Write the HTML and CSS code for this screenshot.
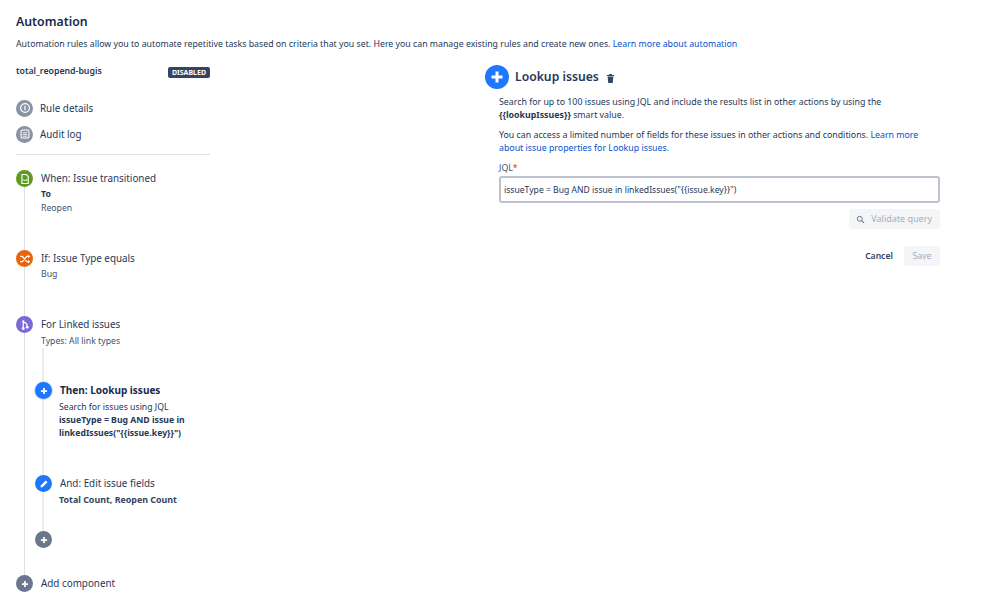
FILE: index.html
```html
<!DOCTYPE html>
<html lang="en">
<head>
<meta charset="utf-8">
<title>Automation</title>
<link rel="stylesheet" href="styles.css">
</head>
<body>
<div class="page">
  <h1 class="title">Automation</h1>
  <p class="intro">Automation rules allow you to automate repetitive tasks based on criteria that you set. Here you can manage existing rules and create new ones. <a href="#">Learn more about automation</a></p>
  <div class="columns">
    <aside class="sidebar">
      <div class="rule-head"><span class="rule-name">total_reopend-bugis</span><span class="badge">DISABLED</span></div>
      <div class="nav">
        <div class="nav-row"><span class="dot grey"><svg viewBox="0 0 16 16"><circle cx="8" cy="8" r="5" fill="none" stroke="#fff" stroke-width="1.4"/><path d="M8 5.5v5" stroke="#fff" stroke-width="1.4"/></svg></span><span class="nav-label">Rule details</span></div>
        <div class="nav-row"><span class="dot grey"><svg viewBox="0 0 16 16"><rect x="3.5" y="3.5" width="9" height="9" rx="1.5" fill="none" stroke="#fff" stroke-width="1.2"/><path d="M5.5 6.5h5M5.5 8.5h5M5.5 10.500h5" stroke="#fff" stroke-width=".9"/></svg></span><span class="nav-label">Audit log</span></div>
      </div>
      <div class="timeline">
        <div class="step when">
          <span class="dot green"><svg viewBox="0 0 16 16"><path d="M4.500 2.800h4.800l2.400 2.400v8H4.500z" fill="none" stroke="#fff" stroke-width="1.300"/><path d="M6 8.500l1.200 1.500 1-1 1 1 1-2" fill="none" stroke="#fff" stroke-width="1.100"/></svg></span>
          <div class="step-body"><div class="step-title">When: Issue transitioned</div><div class="strong-sm">To</div><div class="sub">Reopen</div></div>
        </div>
        <div class="step cond">
          <span class="dot orange"><svg viewBox="0 0 16 16"><path d="M2.500 5h2.500l5 6h2M2.500 11h2.500l5-6h2" fill="none" stroke="#fff" stroke-width="1.400"/><path d="M11.500 3l2.500 2-2.500 2zM11.500 9l2.500 2-2.500 2z" fill="#fff"/></svg></span>
          <div class="step-body"><div class="step-title">If: Issue Type equals</div><div class="sub">Bug</div></div>
        </div>
        <div class="step branch">
          <span class="dot purple"><svg viewBox="0 0 16 16"><path d="M6 3.500v9M6 5c3 0 4.500 1.500 4.500 4.500" fill="none" stroke="#fff" stroke-width="1.400"/><circle cx="6" cy="12" r="1.600" fill="#fff"/><circle cx="10.500" cy="10.500" r="1.600" fill="#fff"/><circle cx="6" cy="3.800" r="1.300" fill="#fff"/></svg></span>
          <div class="step-body"><div class="step-title">For Linked issues</div><div class="sub">Types: All link types</div></div>
        </div>
        <div class="nested">
          <div class="step then">
            <span class="dot blue ring"><svg viewBox="0 0 16 16"><path d="M8 4.500v7M4.500 8h7" stroke="#fff" stroke-width="2"/></svg></span>
            <div class="step-body"><div class="step-title bold">Then: Lookup issues</div><div class="sub dark">Search for issues using JQL</div><div class="strong-sm wrap">issueType = Bug AND issue in linkedIssues("{{issue.key}}")</div></div>
          </div>
          <div class="step and">
            <span class="dot blue"><svg viewBox="0 0 16 16"><path d="M4 12l.600-2.600 5.400-5.400 2 2-5.400 5.400z" fill="#fff"/></svg></span>
            <div class="step-body"><div class="step-title">And: Edit issue fields</div><div class="strong-sm slate">Total Count, Reopen Count</div></div>
          </div>
          <div class="step add-inner">
            <span class="dot slate-bg"><svg viewBox="0 0 16 16"><path d="M8 4.500v7M4.500 8h7" stroke="#fff" stroke-width="2"/></svg></span>
          </div>
        </div>
        <div class="step add-outer">
          <span class="dot slate-bg"><svg viewBox="0 0 16 16"><path d="M8 4.500v7M4.500 8h7" stroke="#fff" stroke-width="2"/></svg></span>
          <div class="step-body"><div class="step-title">Add component</div></div>
        </div>
      </div>
    </aside>
    <main class="detail">
      <div class="detail-head">
        <span class="dot big blue"><svg viewBox="0 0 24 24"><path d="M12 6.500v11M6.500 12h11" stroke="#fff" stroke-width="3"/></svg></span>
        <h2 class="detail-title">Lookup issues</h2>
        <svg class="trash" viewBox="0 0 10 12"><path d="M1 2.200h8v1H1zM3.500 1h3v1h-3zM1.800 3.800h6.400l-.7 7.200h-5z" fill="#344563"/></svg>
      </div>
      <div class="detail-body">
        <p class="para">Search for up to 100 issues using JQL and include the results list in other actions by using the <b>{{lookupIssues}}</b> smart value.</p>
        <p class="para">You can access a limited number of fields for these issues in other actions and conditions. <a href="#">Learn more about issue properties for Lookup issues.</a></p>
        <label class="field-label">JQL<span class="req">*</span></label>
        <div class="input">issueType = Bug AND issue in linkedIssues("{{issue.key}}")</div>
        <div class="validate-row"><span class="btn-disabled validate"><svg class="search" viewBox="0 0 12 12"><circle cx="5" cy="5" r="3.300" fill="none" stroke="#6b778c" stroke-width="1.300"/><path d="M7.500 7.500l3 3" stroke="#6b778c" stroke-width="1.400"/></svg>Validate query</span></div>
        <div class="actions"><span class="cancel">Cancel</span><span class="btn-disabled save">Save</span></div>
      </div>
    </main>
  </div>
</div>
</body>
</html>
```
FILE: styles.css
```css
* { box-sizing: border-box; }
html, body { margin: 0; background: #fff; }
body {
  width: 999px;
  height: 610px;
  overflow: hidden;
  font-family: "Noto Sans", "Open Sans", sans-serif;
  font-size: 8.750px;
  line-height: 14px;
  color: #172b4d;
}
.page { padding: 13px 16px 0; }
.title { margin: 0; font-size: 12.300px; font-weight: 600; line-height: 18px; }
.intro { margin: 6px 0 0; font-size: 8.780px; line-height: 14px; color: #253858; }
a { color: #0052cc; text-decoration: none; }
.columns { display: flex; margin-top: 13px; }
.sidebar { width: 194px; flex: none; }
.rule-head { display: flex; justify-content: space-between; align-items: center; height: 14px; }
.rule-name { font-weight: 600; color: #253858; }
.badge {
  width: 42px;
  height: 11px;
  margin-top: 2px;
  background: #344563;
  color: #fff;
  font-size: 7px;
  font-weight: 700;
  line-height: 11px;
  text-align: center;
  border-radius: 2px;
}
.nav { margin-top: 17px; padding-bottom: 7px; border-bottom: 1px solid #dfe1e6; }
.nav-row { display: flex; align-items: center; gap: 7px; height: 26px; color: #253858; font-size: 9.850px; }
.dot {
  width: 17px;
  height: 17px;
  flex: none;
  border-radius: 50%;
  display: flex;
  align-items: center;
  justify-content: center;
  position: relative;
  z-index: 1;
}
.dot svg { width: 14px; height: 14px; display: block; }
.dot.big { width: 24px; height: 24px; }
.dot.big svg { width: 24px; height: 24px; }
.grey { background: #8993a4; }
.green { background: #5e9a1f; }
.orange { background: #e8650f; }
.purple { background: #7a6bd8; }
.blue { background: #1f77ff; }
.slate-bg { background: #6b778c; }
.ring { box-shadow: 0 0 0 1px #cfe0ff; }
.timeline { position: relative; margin-top: 15px; }
.timeline::before {
  content: "";
  position: absolute;
  left: 8px;
  top: 0;
  height: 405px;
  width: 1px;
  background: #dfe1e6;
}
.step { display: flex; gap: 8px; align-items: flex-start; }
.step-title { font-size: 9.850px; line-height: 17px; color: #253858; }
.step-title.bold { font-weight: 700; font-size: 10px; color: #172b4d; }
.step-body { min-width: 0; }
.sub { font-size: 8.700px; line-height: 15px; color: #42526e; }
.sub.dark { color: #253858; margin: 1px 0 0 -1px; }
.strong-sm { font-size: 8.700px; line-height: 15px; font-weight: 700; color: #253858; }
.strong-sm.slate { font-size: 8.900px; color: #344563; margin-left: -1px; }
.wrap { width: 136px; line-height: 13px; margin: -1px 0 0 -1px; }
.when { height: 80px; }
.when .sub { margin-top: -1px; }
.cond { height: 66px; }
.branch { height: 66px; }
.branch .sub { margin-top: 1px; }
.nested { position: relative; padding-left: 19px; height: 193px; }
.nested::before {
  content: "";
  position: absolute;
  left: 26px;
  top: -34px;
  height: 192px;
  width: 2px;
  background: #ebecf0;
}
.then { height: 93px; }
.and { height: 56px; }
.add-inner { height: 44px; }
.add-outer { align-items: center; }
.detail { margin-left: 275px; width: 455px; }
.detail-head { display: flex; align-items: center; gap: 6px; height: 24px; margin-top: 1px; }
.detail-title { margin: 0; font-size: 12.200px; font-weight: 600; line-height: 24px; color: #253858; }
.trash { width: 9px; height: 11px; margin: 2px 0 0 1px; }
.detail-body { padding: 7px 0 0 14px; }
.para { margin: 0 0 7px; font-size: 8.800px; line-height: 13px; color: #253858; width: 430px; }
.field-label { display: block; margin-top: 7px; height: 12px; line-height: 12px; color: #42526e; }
.req { color: #de350b; }
.input {
  margin-top: 2px;
  height: 27px;
  border: 2px solid #bcc1cd;
  border-radius: 3px;
  padding-left: 3px;
  font-size: 8.600px;
  line-height: 24px;
  color: #253858;
}
.validate-row { display: flex; justify-content: flex-end; margin-top: 6px; }
.btn-disabled {
  display: inline-flex;
  align-items: center;
  height: 20px;
  padding: 0 8px 0 9px;
  background: #f4f5f7;
  border-radius: 3px;
  color: #a5adba;
}
.validate { font-size: 9px; }
.search { width: 9px; height: 9px; margin: 0 6px 0 -2px; }
.actions { display: flex; justify-content: flex-end; align-items: center; gap: 11px; margin-top: 17px; }
.cancel { color: #344563; font-size: 8.600px; font-weight: 600; }
.save { padding: 0 8.500px; height: 20px; }
```
